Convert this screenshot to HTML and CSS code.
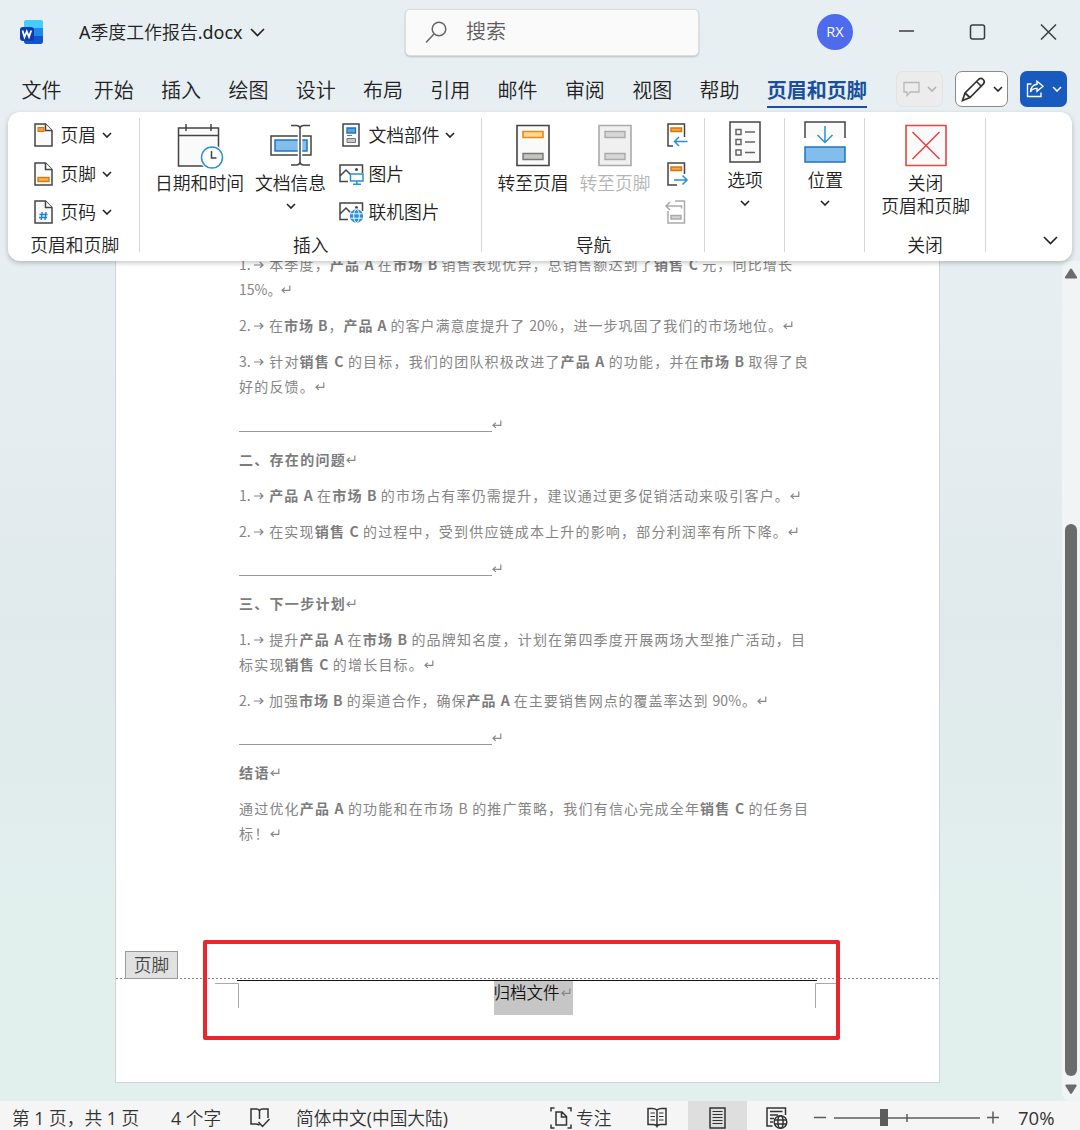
FILE: index.html
```html
<!DOCTYPE html>
<html lang="zh-CN">
<head>
<meta charset="utf-8">
<title>A季度工作报告.docx</title>
<link rel="stylesheet" href="styles.css">
</head>
<body>
<svg class="defs" width="0" height="0">
  <defs>
    <symbol id="chev" viewBox="0 0 10 6"><path d="M1 1l4 4 4-4" fill="none" stroke="currentColor" stroke-width="1.6"/></symbol>
    <symbol id="chev-lg" viewBox="0 0 15 9"><path d="M1 1l6.5 6.5L14 1" fill="none" stroke="currentColor" stroke-width="1.6"/></symbol>
    <symbol id="ret" viewBox="0 0 10 9"><path d="M8.8 .5v4.8H1M3.8 2.6L1 5.3l2.800 2.600" fill="none" stroke="currentColor" stroke-width="1.200"/></symbol>
    <symbol id="arr" viewBox="0 0 10 8"><path d="M0 4h9M5.800 1L9 4 5.800 7" fill="none" stroke="currentColor" stroke-width="1.200"/></symbol>
    <symbol id="doc" viewBox="0 0 19 24"><path d="M1 1h10.5L18 7.5V23H1z" fill="#fafafa" stroke="#444" stroke-width="1.5"/><path d="M11.5 1v6.5H18" fill="#fff" stroke="#444" stroke-width="1.5"/></symbol>
    <symbol id="pic" viewBox="0 0 25 22"><path d="M9 17.500H1V1h22.500v8M1 12l6-6 5 5" fill="none" stroke="#444" stroke-width="1.5"/><circle cx="17.500" cy="5.500" r="1.500" fill="#444"/></symbol>
  </defs>
</svg>
<header class="titlebar">
  <svg class="logo" viewBox="0 0 24 25">
    <rect x="4" y="0" width="19" height="24" rx="3" fill="#2fb4f4"/>
    <path d="M4 3a3 3 0 0 1 3-3h13a3 3 0 0 1 3 3v5H4z" fill="#45cdfb"/>
    <path d="M4 8h19v8H4z" fill="#2087ec"/>
    <path d="M4 16h19v5a3 3 0 0 1-3 3H7a3 3 0 0 1-3-3z" fill="#1453cf"/>
    <rect x="0" y="7" width="14" height="14" rx="3" fill="#0b3dae"/>
    <path d="M2.500 10.500l2 6.500L6.800 11.500 9 17l2.200-6.500" fill="none" stroke="#fff" stroke-width="1.800"/>
  </svg>
  <div class="doc-name"><span class="latin">A</span>季度工作报告<span class="latin">.docx</span></div>
  <svg class="title-chev"><use href="#chev-lg"/></svg>
  <div class="search">
    <svg width="22" height="23" viewBox="0 0 22 23" fill="none" stroke="#666" stroke-width="1.500"><circle cx="13" cy="8" r="6.800"/><path d="M8 13l-8 8.500"/></svg>
    <span>搜索</span>
  </div>
  <div class="avatar">RX</div>
  <svg class="winctl" width="160" height="20" viewBox="0 0 160 20" fill="none" stroke="#3c3c3c" stroke-width="1.500">
    <path d="M1 9h15"/><rect x="72.500" y="3" width="14" height="14" rx="2"/><path d="M143 2.500l15 15M158 2.500l-15 15"/>
  </svg>
</header>
<nav class="tabs">
  <span class="first">文件</span><span>开始</span><span>插入</span><span>绘图</span><span>设计</span><span>布局</span><span>引用</span><span>邮件</span><span>审阅</span><span>视图</span><span>帮助</span><span class="active">页眉和页脚</span>
  <div class="tools">
    <div class="tool disabled"><svg width="17" height="16" viewBox="0 0 17 16" fill="none" stroke="#b8b8b8" stroke-width="1.300"><path d="M1 1.500h15v9.500H7.500L4 14.500V11H1z"/></svg><svg class="chev"><use href="#chev"/></svg></div>
    <div class="tool pen"><svg width="25" height="25" viewBox="0 0 25 25" fill="none" stroke="#333" stroke-width="1.700"><path d="M1.500 23.500L4 16 17.500 2.500q2.500-2.200 4.700 0t0 4.700L9 20.500zM15.500 4.500l5 5M4 16l5 4.500"/></svg><svg class="chev"><use href="#chev"/></svg></div>
    <div class="tool share"><svg width="19" height="18" viewBox="0 0 19 18" fill="none" stroke="#fff" stroke-width="1.400"><path d="M5.500 4H1.500v12.500h13.500V12.500M11 1.200l6 5-6 5V8.400Q6.500 8 4.500 12 5 4.800 11 4.200z"/></svg><svg class="chev"><use href="#chev"/></svg></div>
  </div>
</nav>
<section class="ribbon">
  <div class="group g-hf">
    <div class="rows">
      <div class="row"><svg class="ic-doc" viewBox="0 0 19 24"><use href="#doc"/><rect x="4" y="4.500" width="6" height="4" fill="#f49a3c" stroke="#d97706"/></svg><span>页眉</span><svg class="chev"><use href="#chev"/></svg></div>
      <div class="row"><svg class="ic-doc" viewBox="0 0 19 24"><use href="#doc"/><rect x="4" y="15.500" width="11" height="4" fill="#f9b04e" stroke="#d97706" stroke-width="1.300"/></svg><span>页脚</span><svg class="chev"><use href="#chev"/></svg></div>
      <div class="row"><svg class="ic-doc" viewBox="0 0 19 24"><use href="#doc"/><path d="M8.200 12l-1 8M12 12l-1 8M5.500 14.500h8M5 17.500h8" stroke="#1a86d0" stroke-width="1.400"/></svg><span>页码</span><svg class="chev"><use href="#chev"/></svg></div>
    </div>
    <div class="label">页眉和页脚</div>
  </div>
  <div class="group g-insert">
    <div class="content">
      <div class="big w-date"><svg width="46" height="46" viewBox="0 0 46 46" fill="none" stroke="#444" stroke-width="1.500"><path d="M1.500 4h40v38h-40z" fill="#fafafa"/><path d="M1.500 11.500h40M9 0v7M34 0v7"/><circle cx="35" cy="33.500" r="12.500" fill="#fff" stroke="none"/><circle cx="35" cy="33.500" r="10.500" fill="#fff" stroke="#2b90d4"/><path d="M34.500 27v7h5"/></svg><span>日期和时间</span></div>
      <div class="big w-info"><svg width="42" height="46" viewBox="0 0 42 46" fill="none" stroke="#444" stroke-width="1.500"><path d="M1 12h40v19H1z" fill="#fff"/><path d="M5 16h32v11H5z" fill="#83bdec" stroke="#1f75bf"/><path d="M30 3v38" stroke="#fff" stroke-width="4.500"/><path d="M21 1.500h5q4 0 4 3.500 0-3.500 4-3.500h6M21 41h5q4 0 4-3.500 0 3.500 4 3.500h6M30 5v33"/></svg><span>文档信息</span><svg class="chev"><use href="#chev"/></svg></div>
      <div class="rows">
        <div class="row"><svg class="ic-wide" viewBox="0 0 25 24"><path d="M4 1h16v22H4z" fill="#fafafa" stroke="#444" stroke-width="1.500"/><path d="M8 5h8.500v5H8z" fill="#5ba3e0" stroke="#1f75bf" stroke-width="1.300"/><path d="M8 12.500h5" stroke="#777"/><path d="M8 15.500h8.500v4H8z" fill="#c8c8c8" stroke="#777"/></svg><span>文档部件</span><svg class="chev"><use href="#chev"/></svg></div>
        <div class="row"><svg class="ic-wide" viewBox="0 0 25 24"><use href="#pic" width="25" height="22" y="2"/><path d="M11.500 12h12.500v7H11.500zM17.800 19v3M14 22.200h8" fill="#fff" stroke="#2b90d4" stroke-width="1.500"/></svg><span>图片</span></div>
        <div class="row"><svg class="ic-wide" viewBox="0 0 25 24"><use href="#pic" width="25" height="22" y="2"/><circle cx="17.500" cy="16" r="7.500" fill="#fff"/><circle cx="17.500" cy="16" r="6.700" fill="#2b90d4"/><g fill="none" stroke="#fff" stroke-width=".9"><ellipse cx="17.500" cy="16" rx="2.800" ry="6.500"/><path d="M11.500 13.800h12M11.500 18.200h12"/></g></svg><span>联机图片</span></div>
      </div>
    </div>
    <div class="label">插入</div>
  </div>
  <div class="group g-nav">
    <div class="content">
      <div class="big w-go"><svg width="34" height="46" viewBox="0 0 34 46"><path d="M1 1.500h32v40H1z" fill="#fafafa" stroke="#444" stroke-width="1.600"/><path d="M7 7.500h20v6H7z" fill="#ffd98c" stroke="#e58a1f" stroke-width="1.600"/><path d="M7 29.500h20v6H7z" fill="#c4c4c0" stroke="#777" stroke-width="1.400"/></svg><span>转至页眉</span></div>
      <div class="big w-go off"><svg width="34" height="46" viewBox="0 0 34 46"><path d="M1 1.500h32v40H1z" fill="#f0f0f0" stroke="#aaa" stroke-width="1.600"/><path d="M7 7.500h20v6H7zM7 29.500h20v6H7z" fill="#d6d6d6" stroke="#aaa" stroke-width="1.400"/></svg><span>转至页脚</span></div>
      <div class="rows">
        <div class="row"><svg class="ic-wide" viewBox="0 0 25 24" fill="none" stroke="#444" stroke-width="1.500"><path d="M9 23H4V1h16.500v13"/><path d="M7 5h10.500v3.500H7z" fill="#f7a64a" stroke="#d97706"/><path d="M23.500 18.500H10.500M15 14l-4.500 4.500L15 23" stroke="#2b90d4"/></svg></div>
        <div class="row"><svg class="ic-wide" viewBox="0 0 25 24" fill="none" stroke="#444" stroke-width="1.500"><path d="M20.500 12V1H4v22h9"/><path d="M7 5h10.500v3.500H7z" fill="#f7a64a" stroke="#d97706"/><path d="M10 18h13M18.500 13.500L23 18l-4.500 4.500" stroke="#2b90d4"/></svg></div>
        <div class="row"><svg class="ic-wide" viewBox="0 0 25 24" fill="none" stroke="#aaa" stroke-width="1.500"><path d="M11 1h9.500v22H4V11"/><path d="M7 15.500h10v3.500H7z" fill="#d6d6d6"/><path d="M17.500 8.500V6H2M6 2L2 6l4 4"/></svg></div>
      </div>
    </div>
    <div class="label">导航</div>
  </div>
  <div class="group g-opt">
    <div class="big high"><svg width="32" height="42" viewBox="0 0 32 42" fill="none" stroke="#444" stroke-width="1.500"><path d="M1 1h30v40H1z" fill="#fafafa"/><path d="M7 8.500h5v5H7zM7 18.500h5v5H7zM7 29h5v5H7zM16 11h10M16 21h10M16 31.500h10" stroke="#666"/></svg><span>选项</span><svg class="chev"><use href="#chev"/></svg></div>
  </div>
  <div class="group g-opt">
    <div class="big high"><svg width="42" height="42" viewBox="0 0 42 42" fill="none" stroke-width="1.500"><path d="M1 1h40v16H1z" fill="#fafafa"/><path d="M1 17V1h40v16" stroke="#444"/><path d="M21 5v16M13.500 14l7.500 7.500 7.500-7.500" stroke="#2b90d4"/><path d="M1 26h40v15H1z" fill="#83bdec" stroke="#1f75bf"/></svg><span>位置</span><svg class="chev"><use href="#chev"/></svg></div>
  </div>
  <div class="group g-close">
    <div class="content center"><div class="big"><svg width="42" height="46" viewBox="0 0 42 46" fill="none" stroke="#e04848" stroke-width="1.600"><path d="M1 1.500h40v40H1z" fill="#fafafa"/><path d="M7.500 8l27 27M34.500 8l-27 27"/></svg><span>关闭</span><span>页眉和页脚</span></div></div>
    <div class="label">关闭</div>
  </div>
  <svg class="collapse"><use href="#chev-lg"/></svg>
</section>
<main class="workspace">
  <article class="page">
    <div class="body-text">
      <p><span class="line w553"><i>1. <svg class="arr"><use href="#arr"/></svg></i>本季度，<b>产品 A</b> 在<b>市场 B</b> 销售表现优异，总销售额达到了<b>销售 C</b> 元，同比增长</span><span class="line w48">15%。<svg class="ret"><use href="#ret"/></svg></span></p>
      <p><span class="line w554"><i>2. <svg class="arr"><use href="#arr"/></svg></i>在<b>市场 B</b>，<b>产品 A</b> 的客户满意度提升了 20%，进一步巩固了我们的市场地位。<svg class="ret"><use href="#ret"/></svg></span></p>
      <p><span class="line w569"><i>3. <svg class="arr"><use href="#arr"/></svg></i>针对<b>销售 C</b> 的目标，我们的团队积极改进了<b>产品 A</b> 的功能，并在<b>市场 B</b> 取得了良</span><span class="line w86">好的反馈。<svg class="ret"><use href="#ret"/></svg></span></p>
      <p class="rule"><span></span><svg class="ret"><use href="#ret"/></svg></p>
      <p><span class="line w117"><b>二、存在的问题</b><svg class="ret"><use href="#ret"/></svg></span></p>
      <p><span class="line w561"><i>1. <svg class="arr"><use href="#arr"/></svg></i><b>产品 A</b> 在<b>市场 B</b> 的市场占有率仍需提升，建议通过更多促销活动来吸引客户。<svg class="ret"><use href="#ret"/></svg></span></p>
      <p><span class="line w559"><i>2. <svg class="arr"><use href="#arr"/></svg></i>在实现<b>销售 C</b> 的过程中，受到供应链成本上升的影响，部分利润率有所下降。<svg class="ret"><use href="#ret"/></svg></span></p>
      <p class="rule"><span></span><svg class="ret"><use href="#ret"/></svg></p>
      <p><span class="line w117"><b>三、下一步计划</b><svg class="ret"><use href="#ret"/></svg></span></p>
      <p><span class="line w566"><i>1. <svg class="arr"><use href="#arr"/></svg></i>提升<b>产品 A</b> 在<b>市场 B</b> 的品牌知名度，计划在第四季度开展两场大型推广活动，目</span><span class="line w195">标实现<b>销售 C</b> 的增长目标。<svg class="ret"><use href="#ret"/></svg></span></p>
      <p><span class="line w528"><i>2. <svg class="arr"><use href="#arr"/></svg></i>加强<b>市场 B</b> 的渠道合作，确保<b>产品 A</b> 在主要销售网点的覆盖率达到 90%。<svg class="ret"><use href="#ret"/></svg></span></p>
      <p class="rule"><span></span><svg class="ret"><use href="#ret"/></svg></p>
      <p><span class="line w41"><b>结语</b><svg class="ret"><use href="#ret"/></svg></span></p>
      <p><span class="line w569">通过优化<b>产品 A</b> 的功能和在市场 B 的推广策略，我们有信心完成全年<b>销售 C</b> 的任务目</span><span class="line w41">标！<svg class="ret"><use href="#ret"/></svg></span></p>
    </div>
    <footer class="page-footer">
      <div class="tag">页脚</div>
      <div class="footer-body">
        <svg class="corner" width="25" height="26" viewBox="0 0 25 26"><path d="M0 .5h23.500V25" fill="none" stroke="#a8a8a8"/></svg>
        <div class="selected">归档文件<svg class="ret"><use href="#ret"/></svg></div>
        <svg class="corner" width="25" height="26" viewBox="0 0 25 26"><path d="M25 .5H.500V25" fill="none" stroke="#a8a8a8"/></svg>
      </div>
      <div class="highlight"></div>
    </footer>
  </article>
  <div class="scrollbar">
    <svg width="14" height="12" viewBox="0 0 14 12"><path d="M6 1.200q1-1.400 2 0l5 7.800q.6 1.500-1 1.500H2q-1.600 0-1-1.500z" fill="#6b6b6b"/></svg>
    <div class="thumb"></div>
    <svg width="14" height="12" viewBox="0 0 14 12"><path d="M6 10.300q1 1.400 2 0l4.600-7.300q.6-1.500-1-1.500H2.400q-1.600 0-1 1.500z" fill="#6b6b6b"/></svg>
  </div>
</main>
<footer class="status">
  <span class="s-page">第 <span class="latin">1</span> 页，共 <span class="latin">1</span> 页</span>
  <span class="s-count"><span class="latin">4</span> 个字</span>
  <svg class="s-book" width="22" height="22" viewBox="0 0 22 22" fill="none" stroke="#333" stroke-width="1.500"><path d="M10.500 18q-2-1-4-1H2V2h5.500q2.500 0 3 2 .5-2 3-2H19v9M10.500 4v8M9.500 15l4 4.500 7-7.500"/></svg>
  <span class="s-lang">简体中文<span class="latin">(</span>中国大陆<span class="latin">)</span></span>
  <svg class="s-focus" width="22" height="22" viewBox="0 0 22 22" fill="none" stroke="#333" stroke-width="1.500"><path d="M4.500 1H1v3.500M17.500 1H21v3.500M4.500 21H1v-3.500M17.500 21H21v-3.500M6 5h6l4.500 4.500V18H6zM11.500 5v5h5"/></svg>
  <span class="s-focus-text">专注</span>
  <svg class="s-read" width="20" height="21" viewBox="0 0 20 21" fill="none" stroke="#333" stroke-width="1.500"><path d="M10 3Q8 1.500 5.500 1.500H1v16h5.500q2.500 0 3.500 2 1-2 3.500-2H19v-16h-4.500Q12 1.500 10 3zv16"/><path d="M3.500 6H8M3.500 9.500H8M3.500 13H8M12 6h4.500M12 9.500h4.500M12 13h4.500" stroke-width="1.200"/></svg>
  <div class="s-print"><svg width="17" height="22" viewBox="0 0 17 22" fill="none" stroke="#333" stroke-width="1.500"><path d="M1 1h15v20H1z"/><path d="M3.500 4.500h10M3.500 7.500h10M3.500 10.500h10M3.500 13.500h10M3.500 16.500h10" stroke-width="1.200"/></svg></div>
  <svg class="s-web" width="22" height="22" viewBox="0 0 22 22" fill="none" stroke="#333" stroke-width="1.500"><path d="M6.500 19H1V1h18.500v7M4 4.500h12.500M4 8h8M4 11.500h4M4 15h3"/><circle cx="14.500" cy="15" r="6.300" fill="#f5f5f5"/><ellipse cx="14.500" cy="15" rx="2.600" ry="6.300"/><path d="M8.500 13h12M8.500 17h12"/></svg>
  <svg class="s-zoom" width="188" height="20" viewBox="0 0 188 20" fill="none" stroke="#5c5c5c" stroke-width="1.500"><path d="M1 10.500h12M21 11h146M94 7v8M174 10.500h12M180 4.500v12"/><rect x="67" y="2" width="8" height="17" fill="#5c5c5c" stroke="none"/></svg>
  <span class="s-pct">70%</span>
</footer>
</body>
</html>
```
FILE: styles.css
```css
* { box-sizing: border-box; }
body {
  margin: 0; width: 1080px; height: 1130px; overflow: hidden;
  display: flex; flex-direction: column;
  font-family: "Open Sans", "Noto Sans CJK SC", sans-serif;
  font-weight: 350; color: #222;
  background: linear-gradient(180deg, #e7eff2 0, #e6eef1 30%, #e0e9ec 55%, #e1efed 80%, #e1efed 100%);
}
svg { display: block; flex: none; overflow: visible; }
.defs { position: absolute; }
span, .label { white-space: nowrap; }
.chev { width: 10px; height: 6px; }
.latin { font-weight: 400; }

.titlebar { height: 66px; flex: none; display: flex; align-items: center; padding: 0 22px 2px 20px; font-family: "Noto Sans", "Noto Sans CJK SC", sans-serif; }
.logo { width: 24px; height: 25px; }
.doc-name { width: 164px; margin-left: 35px; margin-top: -2px; font-size: 17.900px; white-space: nowrap; }
.title-chev { width: 15px; height: 9px; margin-left: 7px; }
.search { width: 294px; height: 47px; margin-left: 140px; padding-left: 20px; display: flex; align-items: center; gap: 18px; border-radius: 5px; background: #fafafa; border: 1px solid #dadedf; box-shadow: 0 1px 2px rgba(0,0,0,.2); font-size: 20px; line-height: 26px; color: #5c5c5c; }
.avatar { width: 36px; height: 36px; margin-left: 118px; border-radius: 50%; background: #4f6bed; color: #fff; font: 400 14.500px/36px "Open Sans", sans-serif; text-align: center; }
.winctl { margin-left: 45px; }

.tabs { height: 46px; flex: none; display: flex; align-items: center; gap: 27.300px; padding-left: 21.500px; font-size: 20px; line-height: 30px; }
.tabs .first { margin-right: 5px; }
.tabs > span { width: 40px; height: 30px; margin-top: 3px; }
.tabs > .active { width: 100px; font-weight: 700; color: #184f9f; box-shadow: 0 2px #184fa5; }
.tools { display: flex; gap: 12px; margin-left: 2px; }
.tool { width: 47px; height: 36px; border-radius: 7px; display: flex; align-items: center; justify-content: center; gap: 7px; }
.disabled { background: #ececec; border: 1px solid #e2e4e4; color: #b0b0b0; }
.pen { width: 53px; background: #fff; border: 1px solid #8a8a8a; }
.share { background: #185abd; color: #fff; }

.ribbon { position: relative; z-index: 2; height: 149px; flex: none; margin: 0 8px; background: #fff; border-radius: 12px; box-shadow: 0 2px 5px rgba(0,0,0,.22); display: flex; font-size: 17.800px; line-height: 22px; }
.group { height: 149px; display: flex; flex-direction: column; padding-top: 4px; background: linear-gradient(#d6d6d6, #d6d6d6) right 6px / 1px 134px no-repeat; }
.g-hf { width: 131.500px; }
.g-insert { width: 342.500px; }
.g-nav { width: 223px; }
.g-opt { width: 80.200px; }
.g-close { width: 120.500px; }
.content { display: flex; height: 115.500px; }
.content.center { justify-content: center; }
.label { height: 27px; line-height: 26px; text-align: center; }
.g-hf .label { padding-left: 2px; }
.g-close .label { padding-right: 1px; }
.row { height: 38.500px; display: flex; align-items: center; }
.row > .chev { margin-left: 5.500px; }
.g-hf .row { padding-left: 25.500px; }
.ic-doc { width: 19px; height: 24px; margin-right: 8px; }
.ic-wide { width: 25px; height: 24px; margin-right: 5px; }
.big { display: flex; flex-direction: column; align-items: center; padding-top: 8px; }
.big > svg:first-child { margin-bottom: 2px; }
.big > span { line-height: 23px; }
.big > .chev { margin-top: 8px; }
.high { padding-top: 5px; }
.high > svg:first-child { margin-bottom: 6px; }
.w-date { width: 90px; margin-left: 15px; }
.w-info { width: 74px; margin-left: 9px; margin-right: 11px; }
.w-go { width: 74px; margin-right: 8px; }
.g-nav .content { padding-left: 14px; }
.g-nav .row { padding-left: 4px; }
.off { color: #b4b4b4; }
.collapse { width: 15px; height: 9px; margin: 124px 0 0 57px; }

.workspace { flex: 1; min-height: 0; display: flex; justify-content: space-between; padding-left: 115px; overflow: hidden; }
.page { width: 825px; height: 822px; background: #fff; border: 1px solid #d0d6d6; border-top: 0; display: flex; flex-direction: column; justify-content: space-between; }
.body-text { margin: -9px 0 0 123px; font: 400 14px/25.200px "Noto Sans CJK SC", sans-serif; color: #858585; }
.body-text p { margin: 0 0 10.870px; }
.line { display: block; height: 25.200px; text-align: justify; text-align-last: justify; }
.line i { display: inline-block; width: 29px; font-style: normal; text-align-last: left; }
.body-text b { font-weight: 700; color: #7c7c7c; }
.ret { width: 10px; height: 9px; display: inline-block; color: #888; vertical-align: 1px; }
.arr { width: 10px; height: 8px; display: inline-block; vertical-align: 1px; }
.w41 { width: 41px; }
.w48 { width: 48px; }
.w86 { width: 86px; }
.w117 { width: 117px; }
.w195 { width: 195px; }
.w528 { width: 528px; }
.w553 { width: 553px; }
.w554 { width: 554px; }
.w559 { width: 559px; }
.w561 { width: 561px; }
.w566 { width: 566px; }
.w569 { width: 569px; }
.rule { height: 25.200px; display: flex; align-items: flex-start; }
.rule span { width: 253px; height: 21px; border-bottom: 1px solid #999; }
.rule .ret { margin-top: 9px; }

.page-footer { position: relative; height: 104.500px; background: repeating-linear-gradient(90deg, #888 0 2px, transparent 2px 4px) 0 0 / 100% 1px no-repeat; padding: 2px 99px 0 99px; }
.tag { position: absolute; left: 9px; top: -27px; width: 53px; height: 28px; background: #e1e1e1; border: 1px solid #999; font-size: 17.700px; line-height: 26px; text-align: center; color: #444; }
.footer-body { display: flex; justify-content: space-between; background: linear-gradient(#111, #111) 22px 0 / 580px 1px no-repeat; }
.corner { margin-top: 3px; }
.selected { width: 79px; height: 34px; margin: 1px 0 0 11px; background: #c6c6c6; font: 350 16.500px/23px "Noto Sans CJK SC", sans-serif; white-space: nowrap; display: flex; color: #111; }
.selected .ret { margin-top: 7px; width: 12px; }
.highlight { position: absolute; left: 87px; top: -38px; width: 637px; height: 100px; border: 4px solid #e8262c; border-radius: 2px; }

.scrollbar { width: 18px; display: flex; flex-direction: column; align-items: center; justify-content: space-between; padding: 7px 0 6px; background: #f1f4f5; border-radius: 8px 0 0 8px; }
.thumb { width: 12px; height: 552px; margin-top: 236px; background: #6b6b6b; border-radius: 6px; }

.status { height: 29px; flex: none; display: flex; align-items: flex-start; background: #f5f5f5; font-size: 17.700px; line-height: 34px; padding-left: 12px; color: #333; }
.status svg { margin-top: 6px; }
.s-page { width: 159px; }
.s-count { width: 78px; }
.s-book { margin-right: 25px; }
.s-lang { width: 254px; }
.s-focus-text { width: 71px; margin-left: 4px; }
.s-read { margin-right: 21px; }
.s-print { width: 59px; height: 29px; display: flex; justify-content: center; background: #dedede; }
.s-web { margin: 0 25px 0 19px; }
.s-pct { margin-left: 17px; font-size: 18.500px; font-weight: 400; }
```
